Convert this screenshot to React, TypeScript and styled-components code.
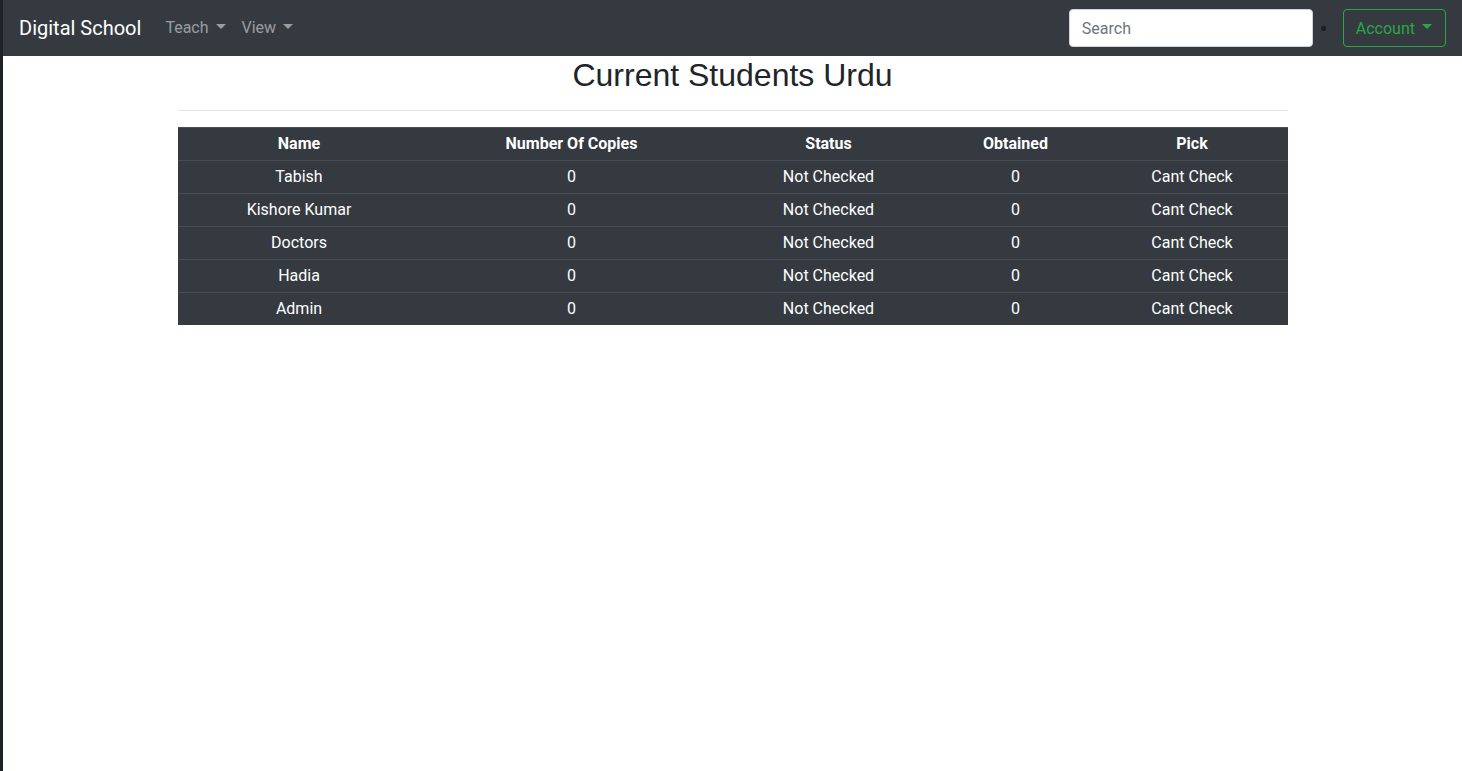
import React from "react";
import styled, { createGlobalStyle } from "styled-components";

const Global = createGlobalStyle`
  html, body { margin: 0; padding: 0; }
  body {
    background: #fff;
    border-left: 3px solid #1f2226;
    min-height: 771px;
    box-sizing: border-box;
    font-family: Roboto, "Noto Sans", sans-serif;
    font-size: 16px;
    line-height: 1.5;
    color: #212529;
  }
  * { box-sizing: border-box; }
`;

const Navbar = styled.nav`
  height: 56px;
  background: #343a40;
  display: flex;
  align-items: center;
  padding: 8px 16px;
`;

const Brand = styled.a`
  color: #fff;
  font-size: 20px;
  line-height: 30px;
  margin-right: 16px;
  text-decoration: none;
`;

const NavList = styled.div`
  display: flex;
  align-items: center;
  flex: 1;
`;

const NavLink = styled.a`
  color: rgba(255, 255, 255, 0.5);
  padding: 8px;
  font-size: 16px;
  line-height: 24px;
  text-decoration: none;
  display: flex;
  align-items: center;
`;

const Caret = styled.span<{ $color: string }>`
  display: inline-block;
  margin-left: 7px;
  width: 0;
  height: 0;
  border-top: 5px solid ${(p) => p.$color};
  border-left: 5px solid transparent;
  border-right: 5px solid transparent;
  margin-top: -3px;
`;

const RightSide = styled.div`
  display: flex;
  align-items: center;
`;

const SearchInput = styled.input`
  width: 244px;
  height: 38px;
  border: 1px solid #ced4da;
  border-radius: 4px;
  padding: 6px 12px;
  font-family: Roboto, "Noto Sans", sans-serif;
  font-size: 16px;
  color: #495057;
  background: #fff;
  outline: none;
  &::placeholder { color: #6c757d; }
`;

const Dot = styled.span`
  width: 5px;
  height: 5px;
  border-radius: 50%;
  background: #1c1e21;
  margin: 0 17px 0 8px;
`;

const AccountButton = styled.button`
  height: 38px;
  border: 1px solid #28a745;
  border-radius: 4px;
  background: transparent;
  color: #28a745;
  font-family: Roboto, "Noto Sans", sans-serif;
  font-size: 16px;
  padding: 6px 13px 6px 12px;
  display: flex;
  align-items: center;
`;

const Container = styled.main`
  width: 1110px;
  margin: 0 auto;
`;

const Title = styled.h1`
  margin: 0;
  text-align: center;
  font-family: "Liberation Sans", Arial, sans-serif;
  font-weight: 400;
  font-size: 32px;
  line-height: 38px;
  color: #212529;
`;

const Rule = styled.hr`
  margin: 16px 0 16px;
  border: 0;
  border-top: 1px solid rgba(0, 0, 0, 0.1);
`;

const Table = styled.table`
  width: 100%;
  border-collapse: collapse;
  background: #343a40;
  color: #fff;
  table-layout: fixed;
`;

const HeadCell = styled.th`
  font-weight: 700;
  padding: 4px;
  line-height: 24px;
  border-top: 1px solid #454d55;
  text-align: center;
`;

const Cell = styled.td`
  padding: 4px;
  line-height: 24px;
  border-top: 1px solid #454d55;
  text-align: center;
`;

const widths = [243, 302, 212, 162, 191];
const headers = ["Name", "Number Of Copies", "Status", "Obtained", "Pick"];
const names = ["Tabish", "Kishore Kumar", "Doctors", "Hadia", "Admin"];

export default function App() {
  return (
    <>
      <Global />
      <Navbar>
        <Brand href="#">Digital School</Brand>
        <NavList>
          <NavLink href="#">
            Teach <Caret $color="rgba(255,255,255,0.5)" />
          </NavLink>
          <NavLink href="#">
            View <Caret $color="rgba(255,255,255,0.5)" />
          </NavLink>
        </NavList>
        <RightSide>
          <SearchInput placeholder="Search" />
          <Dot />
          <AccountButton>
            Account <Caret $color="#28a745" />
          </AccountButton>
        </RightSide>
      </Navbar>
      <Container>
        <Title>Current Students Urdu</Title>
        <Rule />
        <Table>
          <colgroup>
            {widths.map((w, i) => (
              <col key={i} style={{ width: w }} />
            ))}
          </colgroup>
          <thead>
            <tr>
              {headers.map((h) => (
                <HeadCell key={h}>{h}</HeadCell>
              ))}
            </tr>
          </thead>
          <tbody>
            {names.map((n) => (
              <tr key={n}>
                <Cell>{n}</Cell>
                <Cell>0</Cell>
                <Cell>Not Checked</Cell>
                <Cell>0</Cell>
                <Cell>Cant Check</Cell>
              </tr>
            ))}
          </tbody>
        </Table>
      </Container>
    </>
  );
}
